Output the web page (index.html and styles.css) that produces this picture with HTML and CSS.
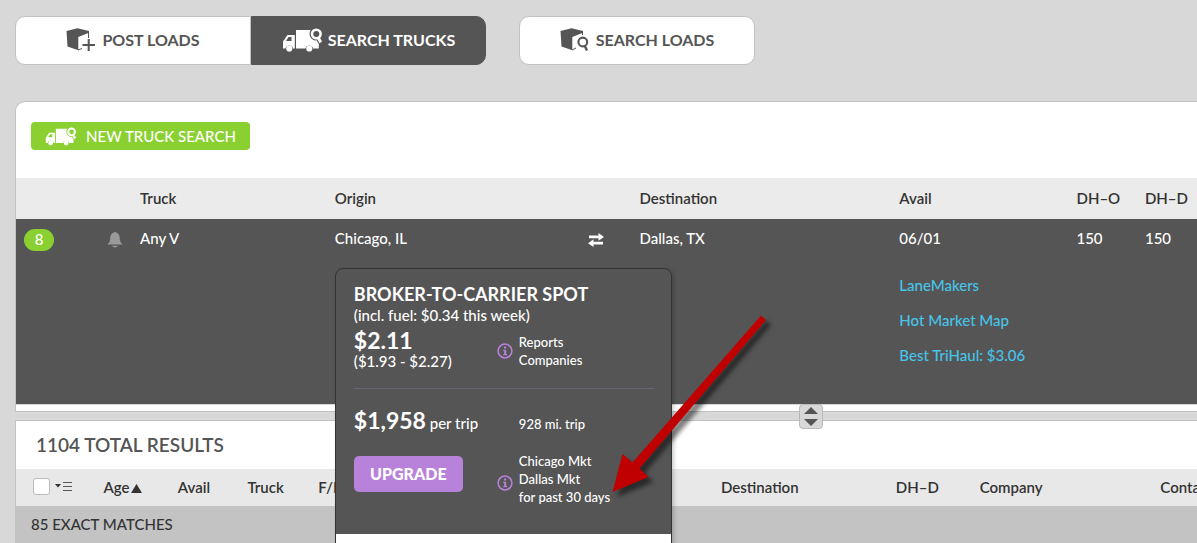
FILE: index.html
```html
<!DOCTYPE html>
<html lang="en">
<head>
<meta charset="utf-8">
<title>Search Trucks</title>
<link rel="stylesheet" href="styles.css">
</head>
<body>
<svg class="defs" aria-hidden="true">
  <symbol id="truck" viewBox="0 0 40 24">
    <path fill="currentColor" d="M14 2H28.600A7 7 0 0 0 33 12.500L34.500 12.200 36.800 16V20.500H31.200A4 4 0 0 0 23.400 20.500H14Z"/>
    <path fill="currentColor" fill-rule="evenodd" d="M5.500 7H12.800V20.500H11.200A4 4 0 0 0 3.400 20.500H1V13.500ZM6.500 9 4 13H9.500V9Z"/>
    <circle fill="currentColor" cx="7.300" cy="20.500" r="3.100"/>
    <circle fill="currentColor" cx="27.300" cy="20.500" r="3.100"/>
    <circle fill="none" stroke="currentColor" stroke-width="2.600" cx="34.300" cy="6" r="4.300"/>
    <path stroke="currentColor" stroke-width="3" d="M36.600 10.500 38.800 14.500"/>
  </symbol>
  <symbol id="box" viewBox="0 0 30 24">
    <path fill="currentColor" d="M0.500 3 11.500 0.200 23 3V4.800L12.300 9V22.300L1.500 18.500Z"/>
  </symbol>
  <symbol id="info" viewBox="0 0 16 16">
    <circle fill="none" stroke="currentColor" stroke-width="1.500" cx="8" cy="8" r="6.900"/>
    <path fill="currentColor" d="M7 3.500h2.200v2H7ZM6.200 6.700h3v4.400h1v1.200H6.200v-1.200h1V7.900h-1Z"/>
  </symbol>
</svg>
<div class="app">
  <nav class="tabs">
    <div class="tab-group">
      <button class="tab tab-first">
        <svg class="box-icon" viewBox="0 0 30 24"><use href="#box" width="30" height="24"/><path fill="none" stroke="currentColor" d="M22.500 4V10M12 22L16 20.500"/><path stroke="currentColor" stroke-width="2" d="M16.500 17H29M22.700 11V23"/></svg>
        Post Loads
      </button>
      <button class="tab tab-active">
        <svg class="truck-icon"><use href="#truck"/></svg>
        Search Trucks
      </button>
    </div>
    <button class="tab tab-single">
      <svg class="box-icon" viewBox="0 0 30 24"><use href="#box" width="30" height="24"/><path fill="none" stroke="currentColor" d="M22.500 4V7M12 22L16 20"/><circle fill="none" stroke="currentColor" stroke-width="2.100" cx="22.800" cy="14" r="4.400"/><path stroke="currentColor" stroke-width="2.400" d="M24.500 17.500 27 22.500"/></svg>
      Search Loads
    </button>
  </nav>

  <section class="panel search-panel">
    <div class="toolbar">
      <button class="new-search"><svg class="truck-small"><use href="#truck"/></svg>New Truck Search</button>
    </div>
    <table class="grid">
      <colgroup><col class="s-count"><col class="s-bell"><col class="s-truck"><col class="s-origin"><col class="s-swap"><col class="s-dest"><col class="s-avail"><col class="s-dho"><col></colgroup>
      <thead>
        <tr><th></th><th></th><th>Truck</th><th>Origin</th><th></th><th>Destination</th><th>Avail</th><th>DH–O</th><th>DH–D</th></tr>
      </thead>
      <tbody>
        <tr class="search-row">
          <td><span class="count">8</span></td>
          <td><svg class="bell" viewBox="0 0 16 17"><path fill="currentColor" d="M7 1.500Q8 .2 9 1.500C12 2.200 12.800 5 12.800 8.500Q12.900 11 15.500 13.500H.5Q3.100 11 3.200 8.500C3.200 5 4 2.200 7 1.500ZM5 14.800h6Q10 16.500 8 16.500T5 14.800Z"/></svg></td>
          <td>Any V</td>
          <td class="origin">Chicago, IL
            <div class="rate-card">
              <div class="rate-body">
                <h2>Broker-to-Carrier Spot</h2>
                <p class="fuel">(incl. fuel: $0.34 this week)</p>
                <div class="rate-row">
                  <div>
                    <strong class="amount">$2.11</strong>
                    <p class="range">($1.93 - $2.27)</p>
                  </div>
                  <div class="note note-top"><svg class="info"><use href="#info"/></svg><p>Reports<br>Companies</p></div>
                </div>
                <hr>
                <div class="rate-row trip-row">
                  <div><strong class="amount">$1,958</strong> per trip</div>
                  <p class="miles">928 mi. trip</p>
                </div>
                <div class="rate-row">
                  <button class="upgrade">Upgrade</button>
                  <div class="note note-market"><svg class="info"><use href="#info"/></svg><p>Chicago Mkt<br>Dallas Mkt<br>for past 30 days</p></div>
                </div>
              </div>
              <div class="rate-footer"></div>
            </div>
          </td>
          <td><svg class="swap" viewBox="0 0 16 14"><path fill="currentColor" d="M1 2.500h9.500V0L16 4l-5.500 3.800V5.200H1ZM15 8.800H5.500V6.200L0 10.200 5.500 14v-2.500H15Z"/></svg></td>
          <td>Dallas, TX</td>
          <td class="avail">06/01
            <ul class="links">
              <li><a href="#">LaneMakers</a></li>
              <li><a href="#">Hot Market Map</a></li>
              <li><a href="#">Best TriHaul: $3.06</a></li>
            </ul>
          </td>
          <td>150</td>
          <td>150</td>
        </tr>
      </tbody>
    </table>
  </section>

  <div class="splitter">
    <button class="handle" aria-label="Resize panels"><svg viewBox="0 0 14 19"><path fill="#555" d="M7 0 14 7H0ZM0 12H14L7 19Z"/></svg></button>
  </div>

  <section class="panel results-panel">
    <h1>1104 Total Results</h1>
    <table class="grid results">
      <colgroup><col class="r-check"><col class="r-age"><col class="r-avail"><col class="r-truck"><col class="r-fp"><col class="r-dest"><col class="r-dhd"><col class="r-company"><col></colgroup>
      <thead>
        <tr>
          <th><div class="select-all"><input type="checkbox" aria-label="Select all"><svg class="list-icon" viewBox="0 0 18 11"><path fill="#333" d="M0 3H6L3 6.500Z"/><path stroke="#555" d="M8 1.500H17M8 5.500H17M8 9.500H17"/></svg></div></th>
          <th>Age<svg class="sort" viewBox="0 0 11 9"><path fill="#333" d="M5.500 0 11 9H0Z"/></svg></th><th>Avail</th><th>Truck</th><th>F/P</th><th>Destination</th><th>DH–D</th><th>Company</th><th>Contact</th>
        </tr>
      </thead>
      <tbody>
        <tr class="matches"><td colspan="9">85 EXACT MATCHES</td></tr>
      </tbody>
    </table>
  </section>

  <svg class="arrow" viewBox="0 0 160 182" aria-hidden="true"><path fill="#c00000" d="M149 5.500 154 10 27.500 158.500 36.500 167 .5 182 10.500 144 20.500 152.500Z"/></svg>
</div>
</body>
</html>
```

FILE: styles.css
```css
* {
  box-sizing: border-box;
}

body {
  margin: 0;
  background: #d8d8d8;
  color: #333;
  font: 500 15px/20px Lato, "Liberation Sans", sans-serif;
}

button {
  font: inherit;
  cursor: pointer;
}

p, h1, h2, ul {
  margin: 0;
  padding: 0;
}

.defs {
  position: absolute;
  width: 0;
  height: 0;
}

.app {
  position: relative;
  height: 100vh;
  overflow: hidden;
  padding: 16px 0 0 15px;
}

.tabs {
  display: flex;
  gap: 33px;
  margin-bottom: 36px;
}

.tab-group {
  display: flex;
}

.tab {
  display: flex;
  align-items: center;
  justify-content: center;
  gap: 6px;
  width: 236px;
  height: 49px;
  padding: 0 0 2px;
  border: 1px solid #c2c2c2;
  border-radius: 10px;
  background: #fff;
  color: #555;
  font-size: 16px;
  font-weight: 700;
  text-transform: uppercase;
}

.tab-first {
  border-radius: 10px 0 0 10px;
}

.tab-active {
  width: 235px;
  border-color: #555;
  border-radius: 0 10px 10px 0;
  background: #555;
  color: #fff;
}

.box-icon {
  width: 30px;
  height: 24px;
}

.truck-icon {
  width: 40px;
  height: 24px;
}

.panel {
  border: 1px solid #c2c2c2;
  border-right: 0;
  background: #fff;
}

.search-panel {
  padding-bottom: 6px;
  border-radius: 10px 0 0 0;
}

.toolbar {
  padding: 20px 15px 28px;
}

.new-search {
  display: flex;
  align-items: center;
  gap: 10px;
  height: 28px;
  padding: 0 14px;
  border: 0;
  border-radius: 4px;
  background: #8bd031;
  color: #fff;
  text-transform: uppercase;
}

.truck-small {
  width: 31px;
  height: 19px;
}

.grid {
  width: 100%;
  border-collapse: collapse;
  table-layout: fixed;
}

.grid th,
.grid td {
  padding: 0 0 2px;
  font-weight: 500;
  text-align: left;
  white-space: nowrap;
}

.grid th {
  height: 41px;
  background: #ebebeb;
  font-weight: 600;
}

.s-count { width: 7.7%; }
.s-bell { width: 2.8%; }
.s-truck { width: 16.5%; }
.s-origin { width: 21.4%; }
.s-swap { width: 4.4%; }
.s-dest { width: 22%; }
.s-avail { width: 15%; }
.s-dho { width: 5.8%; }

.search-row {
  border-bottom: 1px solid #d8d8d8;
  background: #555;
  color: #fff;
}

.grid .search-row td {
  padding: 9px 0 0;
  vertical-align: top;
}

.count {
  display: block;
  width: 30px;
  margin: 1px 0 0 8px;
  padding-bottom: 2px;
  border-radius: 11px;
  background: #8bd031;
  text-align: center;
}

.bell {
  display: block;
  width: 16px;
  height: 17px;
  margin-top: 3px;
  color: #999;
}

.swap {
  display: block;
  width: 16px;
  height: 14px;
  margin-top: 5px;
}

.links {
  padding: 27px 0 39px;
  list-style: none;
}

.links li + li {
  margin-top: 15px;
}

.links a {
  color: #47c4ea;
  text-decoration: none;
}

.origin {
  position: relative;
}

.rate-card {
  position: absolute;
  z-index: 2;
  top: 49px;
  left: 0;
  width: 337px;
  border: 1px solid #333;
  border-radius: 8px;
  background: #555;
  box-shadow: 2px 2px 4px rgba(0, 0, 0, 0.2);
  overflow: hidden;
}

.rate-body {
  padding: 14px 17px 28px 18px;
}

.rate-card h2 {
  font-size: 18px;
  font-weight: 700;
  line-height: 22px;
  text-transform: uppercase;
}

.rate-row {
  display: grid;
  grid-template-columns: 143px 1fr;
}

.amount {
  font-size: 23px;
  font-weight: 700;
  line-height: 30px;
}

.range {
  line-height: 12px;
}

.note {
  display: flex;
  align-items: center;
  gap: 6px;
  font-size: 13px;
  line-height: 18px;
}

.note-top {
  padding-top: 8px;
}

.info {
  width: 16px;
  height: 16px;
  color: #b982da;
}

.note-market .info {
  margin-top: 8px;
}

.rate-card hr {
  height: 1px;
  margin: 19px 0 16px;
  border: 0;
  background: #67647a;
}

.miles {
  padding: 9px 0 0 22px;
  font-size: 13px;
}

.trip-row {
  margin-bottom: 17px;
}

.upgrade {
  align-self: start;
  width: 109px;
  height: 36px;
  margin-top: 4px;
  padding: 0;
  border: 0;
  border-radius: 5px;
  background: #b982da;
  color: #fff;
  font-size: 16px;
  font-weight: 900;
  text-transform: uppercase;
}

.rate-footer {
  height: 48px;
  background: #fff;
}

.splitter {
  position: relative;
  height: 8px;
}

.handle {
  position: absolute;
  z-index: 1;
  top: -8px;
  left: 66.3%;
  display: grid;
  place-items: center;
  width: 24px;
  height: 25px;
  padding: 0;
  border: 1px solid #bababa;
  border-radius: 4px;
  background: #d8d8d8;
}

.handle svg {
  width: 14px;
  height: 19px;
}

h1 {
  padding: 12px 20px;
  color: #555;
  font-size: 19px;
  font-weight: 600;
  line-height: 24px;
  text-transform: uppercase;
}

.results th {
  height: 37px;
  background: #e8e8e8;
}

.r-check { width: 7.4%; }
.r-age { width: 6.3%; }
.r-avail { width: 5.9%; }
.r-truck { width: 6%; }
.r-fp { width: 34.1%; }
.r-dest { width: 14.8%; }
.r-dhd { width: 7.1%; }
.r-company { width: 15.3%; }

.select-all {
  display: flex;
  align-items: center;
  gap: 5px;
  padding-left: 17px;
}

.select-all input {
  width: 17px;
  height: 17px;
  margin: 0;
  border: 1px solid #bbb;
  border-radius: 3px;
  background: #fff;
  appearance: none;
}

.list-icon {
  width: 18px;
  height: 11px;
}

.sort {
  width: 11px;
  height: 9px;
  margin-left: 2px;
}

.matches {
  background: #c3c3c3;
}

.grid .matches td {
  height: 37px;
  padding-left: 15px;
}

.arrow {
  position: absolute;
  z-index: 3;
  top: 310px;
  left: 612px;
  width: 160px;
  height: 182px;
  overflow: visible;
  filter: drop-shadow(5px 5px 2px rgba(0, 0, 0, 0.5));
  pointer-events: none;
}
```
